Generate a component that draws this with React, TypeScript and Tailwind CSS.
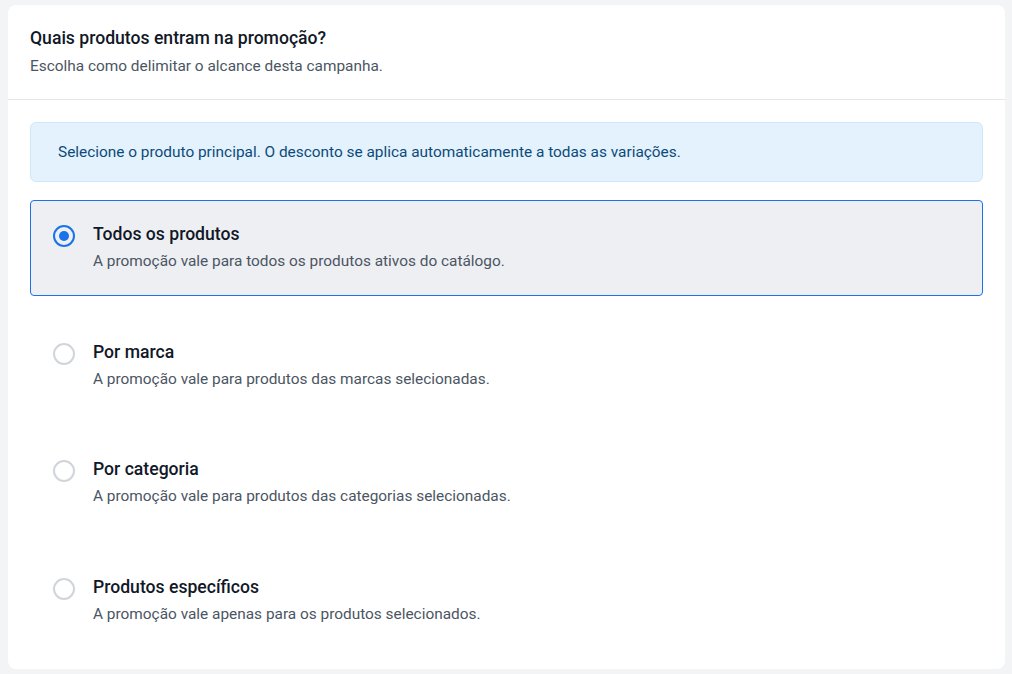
import React, { useState } from "react";

const options = [
  { id: "all", title: "Todos os produtos", desc: "A promoção vale para todos os produtos ativos do catálogo." },
  { id: "brand", title: "Por marca", desc: "A promoção vale para produtos das marcas selecionadas." },
  { id: "cat", title: "Por categoria", desc: "A promoção vale para produtos das categorias selecionadas." },
  { id: "spec", title: "Produtos específicos", desc: "A promoção vale apenas para os produtos selecionados." },
];

export default function App() {
  const [sel, setSel] = useState("all");
  return (
    <div className="min-h-[674px] bg-[#f3f4f6] pt-[5px] pl-[8px] pr-[7px] pb-[5px]" style={{ fontFamily: "Roboto, 'Liberation Sans', sans-serif" }}>
      <div className="bg-white rounded-[8px] h-[664px] flex flex-col">
        <div className="px-[22px] pt-[21px] pb-[23px] border-b border-[#e5e7eb]">
          <div className="text-[17.6px] leading-[24px] font-medium text-[#111827]">Quais produtos entram na promoção?</div>
          <div className="mt-[6px] text-[15.4px] leading-[20px] text-[#4b5563]">Escolha como delimitar o alcance desta campanha.</div>
        </div>
        <div className="px-[22px] pt-[22px] flex flex-col gap-[18px]">
          <div className="rounded-[6px] border border-[#cfe7fc] bg-[#e3f2fd] px-[27px] h-[60px] flex items-center text-[15.4px] leading-[20px] text-[#0d4a7a]">
            Selecione o produto principal. O desconto se aplica automaticamente a todas as variações.
          </div>
          <div className="flex flex-col gap-[22px]">
            {options.map((o) => {
              const active = sel === o.id;
              return (
                <div
                  key={o.id}
                  onClick={() => setSel(o.id)}
                  className={`h-[95.5px] rounded-[4px] border flex items-start pl-[22px] pt-[21px] cursor-pointer ${active ? "border-[#1a73e8] bg-[#eeeff3]" : "border-transparent bg-white"}`}
                >
                  <div className={`mt-[3px] w-[22px] h-[22px] rounded-full border-2 flex items-center justify-center shrink-0 ${active ? "border-[#1a73e8]" : "border-[#d1d5db]"}`}>
                    {active && <div className="w-[10px] h-[10px] rounded-full bg-[#1a73e8]" />}
                  </div>
                  <div className="ml-[18px]">
                    <div className="text-[17.6px] leading-[24px] font-medium text-[#111827]">{o.title}</div>
                    <div className="mt-[5px] text-[15.4px] leading-[20px] text-[#4b5563]">{o.desc}</div>
                  </div>
                </div>
              );
            })}
          </div>
        </div>
      </div>
    </div>
  );
}
